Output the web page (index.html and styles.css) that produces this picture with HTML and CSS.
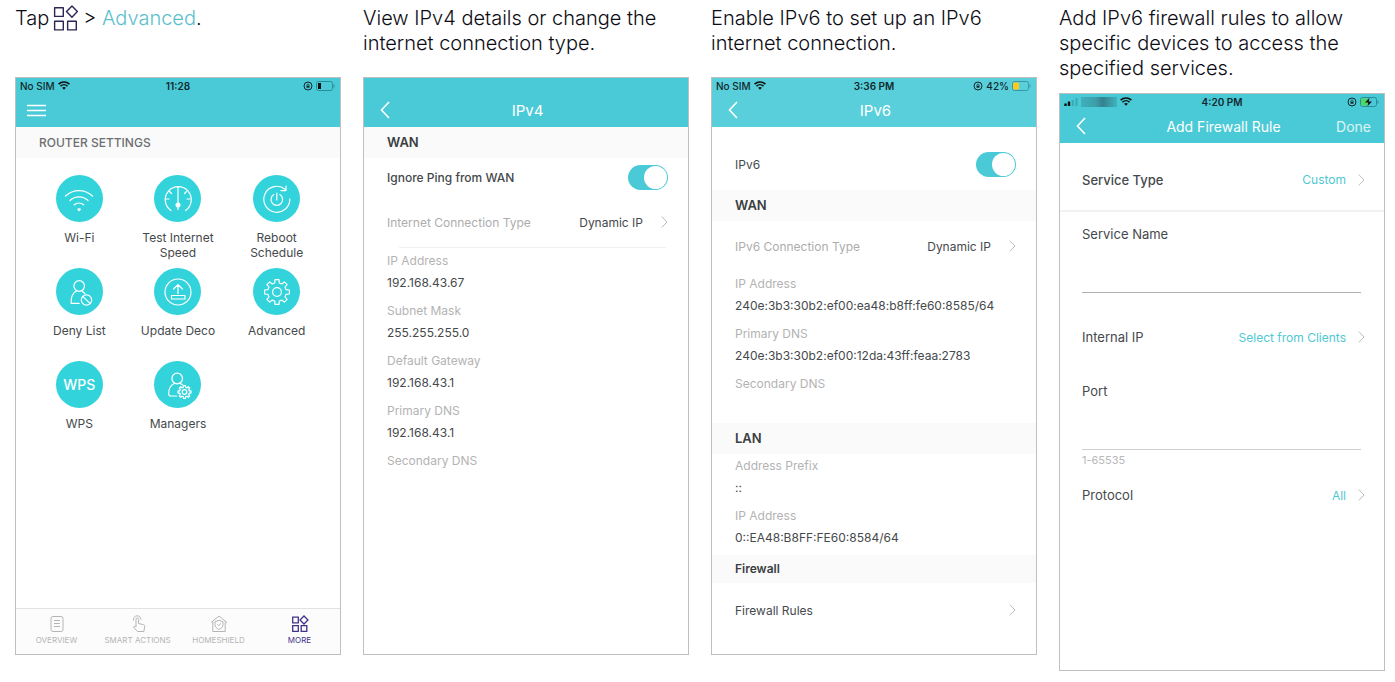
FILE: index.html
```html
<!DOCTYPE html>
<html lang="en">

<head>
    <meta charset="UTF-8">
    <meta name="viewport" content="width=device-width, initial-scale=1.0">
    <title>Deco IPv6 setup</title>
    <link rel="stylesheet" href="styles.css">
</head>

<body>
    <!-- shared icons -->
    <svg class="sprite" aria-hidden="true">
        <symbol id="wifi" viewBox="0 0 12 9">
            <path d="M0.6 3.2a7.8 7.8 0 0 1 10.8 0M2.5 5.2a5 5 0 0 1 7 0" fill="none" stroke="currentColor" stroke-width="1.6" />
            <path d="M4.1 6.8a2.8 2.8 0 0 1 3.8 0L6 8.8z" fill="currentColor" />
        </symbol>
        <symbol id="lock" viewBox="0 0 10 10">
            <circle cx="5" cy="5" r="4" fill="none" stroke="currentColor" />
            <path d="M3.5 4.9h3v1.8h-3z" fill="currentColor" />
            <path d="M4 5V4a1 1 0 0 1 2 0v1" fill="none" stroke="currentColor" stroke-width=".7" />
        </symbol>
        <symbol id="back" viewBox="0 0 10 18">
            <path d="M9 1L1.5 9L9 17" fill="none" stroke="currentColor" stroke-width="1.6" />
        </symbol>
        <symbol id="chevron" viewBox="0 0 7 12">
            <path d="M.8.6L6 6L.8 11.4" fill="none" stroke="currentColor" />
        </symbol>
        <symbol id="more" viewBox="0 0 24 24">
            <path d="M1.5 2.5h8v8h-8zM1.5 15h8v8h-8zM13.5 15h8v8h-8zM17.5.9l5 5.2l-5 5.2l-5-5.2z" fill="none" stroke="currentColor" stroke-width="1.3" stroke-linejoin="round" />
        </symbol>
        <symbol id="more-bold" viewBox="0 0 18 18">
            <path d="M1.7 2.2h5.600v5.600h-5.600zM1.700 10.700h5.600v5.600h-5.600zM10.200 10.700h5.600v5.600h-5.600zM13 1l4 4l-4 4l-4-4z" fill="none" stroke="currentColor" stroke-width="1.300" />
        </symbol>
        <symbol id="gear" viewBox="0 0 46 46">
            <path vector-effect="non-scaling-stroke" d="M20.7 14L21 10.6h4l.3 3.400A9.300 9.300 0 0 1 27.800 15L30.300 12.900L33.100 15.700L31 18.200A9.300 9.300 0 0 1 32 20.700L35.400 21v4L32 25.300A9.300 9.300 0 0 1 31 27.800L33.100 30.300L30.300 33.100L27.800 31A9.300 9.300 0 0 1 25.300 32L25 35.400h-4L20.700 32A9.300 9.300 0 0 1 18.200 31L15.700 33.100L12.900 30.300L15 27.800A9.300 9.300 0 0 1 14 25.300L10.600 25v-4L14 20.700A9.300 9.300 0 0 1 15 18.200L12.900 15.700L15.700 12.900L18.200 15A9.300 9.300 0 0 1 20.700 14z" />
            <circle vector-effect="non-scaling-stroke" cx="23" cy="23" r="4.400" />
        </symbol>
    </svg>

    <main class="steps">
        <!-- More tab -->
        <section class="step">
            <p class="caption">Tap<svg class="caption-icon" role="img" aria-label="More"><use href="#more" /></svg>&gt; <a href="#advanced">Advanced</a>.</p>
            <div class="phone">
                <header class="phone-header">
                    <div class="status">
                        <span class="status-left">No SIM <svg class="status-wifi"><use href="#wifi" /></svg></span>
                        <span class="status-time">11:28</span>
                        <span class="status-right">
                            <svg class="status-lock"><use href="#lock" /></svg>
                            <svg class="battery" viewBox="0 0 20 10"><rect x=".5" y=".5" width="16" height="9" rx="2" fill="none" stroke="#2a8d99" /><rect x="2" y="2" width="3" height="6" fill="#111" /><path d="M18 3.5v3" stroke="#2a8d99" /></svg>
                        </span>
                    </div>
                    <div class="nav">
                        <button class="nav-button menu" type="button" aria-label="Menu"><svg viewBox="0 0 19 13"><path d="M0 1.5h19M0 6.5h19M0 11.5h19" stroke="currentColor" stroke-width="1.6" /></svg></button>
                    </div>
                </header>
                <h2 class="group-title settings-title">ROUTER SETTINGS</h2>
                <div class="tiles">
                    <a class="tile" href="#wi-fi">
                        <span class="tile-icon"><svg viewBox="0 0 46 46"><path d="M9.5 20a19.5 19.5 0 0 1 27 0M14 24.500a13 13 0 0 1 18 0M18.300 28.800a7 7 0 0 1 9.400 0" /><path class="solid" d="M21.800 33.200a2.400 2.400 0 0 1 2.600 0l-1.300 1.500z" /></svg></span>
                        Wi-Fi
                    </a>
                    <a class="tile" href="#speed">
                        <span class="tile-icon"><svg viewBox="0 0 46 46"><path d="M16 34.5a13 13 0 1 1 14.5 0M23 11.500v15M14.500 15.500l2 2M31.500 15.500l-2 2M11 23h3M35 23h-3" /><circle class="solid" cx="23" cy="29" r="1.9" /><path d="M23 30v3.500" /></svg></span>
                        Test Internet Speed
                    </a>
                    <a class="tile" href="#reboot">
                        <span class="tile-icon"><svg viewBox="0 0 46 46"><path d="M31 13.200a13 13 0 1 0 4.800 9.800M32 10v4.600h-5M19.800 18.600a5.800 5.800 0 1 0 6 0M22.800 17v7" /></svg></span>
                        Reboot Schedule
                    </a>
                    <a class="tile" href="#deny-list">
                        <span class="tile-icon"><svg viewBox="0 0 46 46"><circle cx="23.2" cy="17" r="5.3" /><path d="M20.5 21.800c-3.500 2-5.800 6.500-5.300 12.600h8M26 22l3 2.700" /><circle cx="30.500" cy="31" r="5.200" /><path d="M26.800 27.300l7.400 7.400" /></svg></span>
                        Deny List
                    </a>
                    <a class="tile" href="#update">
                        <span class="tile-icon"><svg viewBox="0 0 46 46"><circle cx="23" cy="23" r="13" /><path d="M23 24.500V15.800M18.500 20l4.500-4.400l4.500 4.400M16.500 26.500h13.500v3.500H16.500z" /></svg></span>
                        Update Deco
                    </a>
                    <a class="tile" href="#advanced" id="advanced">
                        <span class="tile-icon"><svg viewBox="0 0 46 46"><use href="#gear" /></svg></span>
                        Advanced
                    </a>
                    <a class="tile" href="#wps">
                        <span class="tile-icon tile-text">WPS</span>
                        WPS
                    </a>
                    <a class="tile" href="#managers">
                        <span class="tile-icon"><svg viewBox="0 0 46 46"><circle cx="22.2" cy="16.5" r="5.300" /><path d="M19.500 21.300c-3.600 2-6 5.500-5.800 10.500c0 1.400.8 2.200 2 2.200h6M25 21.300l2.500 1.500" /><use href="#gear" x="17.500" y="18" width="24" height="24" /></svg></span>
                        Managers
                    </a>
                </div>
                <nav class="tabs">
                    <a class="tab" href="#overview">
                        <svg viewBox="0 0 18 18"><rect x="3" y="1.500" width="12" height="15" rx="2" /><path d="M6 5.500h6M6 8.500h6M6 11.500h6" /></svg>
                        OVERVIEW
                    </a>
                    <a class="tab" href="#smart">
                        <svg viewBox="0 0 18 18"><path d="M7 12V4.300a1.300 1.300 0 0 1 2.600 0v4.200l5 1.200c1 .3 1.200.9 1.100 1.700l-.8 5.100H8.500l-4-4.500c.6-1 1.600-.9 2.500 0M4.500 5.500a3.800 3.800 0 1 1 7.500-.8" /></svg>
                        SMART ACTIONS
                    </a>
                    <a class="tab" href="#homeshield">
                        <svg viewBox="0 0 18 18"><path d="M1 7.500L9 1l8 6.500M2.800 6.500v10h12.400v-10M9 5.300l4 1.400v3c0 2.300-1.800 3.800-4 4.800c-2.200-1-4-2.500-4-4.800v-3zM7.300 9.300l1.400 1.400l2.300-2.300" /></svg>
                        HOMESHIELD
                    </a>
                    <a class="tab active" href="#more-tab">
                        <svg><use href="#more-bold" /></svg>
                        MORE
                    </a>
                </nav>
            </div>
        </section>

        <!-- IPv4 -->
        <section class="step">
            <p class="caption">View IPv4 details or change the internet connection type.</p>
            <div class="phone">
                <header class="phone-header">
                    <div class="status"></div>
                    <div class="nav">
                        <button class="nav-button" type="button" aria-label="Back"><svg class="back"><use href="#back" /></svg></button>
                        <h2 class="nav-title">IPv4</h2>
                    </div>
                </header>
                <h3 class="group-title">WAN</h3>
                <div class="row strong">
                    <label for="ping">Ignore Ping from WAN</label>
                    <input class="switch" type="checkbox" id="ping" checked>
                </div>
                <button class="row row-button" type="button">
                    <span class="muted">Internet Connection Type</span>
                    <span class="row-value">Dynamic IP</span>
                    <svg class="chevron"><use href="#chevron" /></svg>
                </button>
                <hr class="divider">
                <dl class="details">
                    <dt>IP Address</dt>
                    <dd>192.168.43.67</dd>
                    <dt>Subnet Mask</dt>
                    <dd>255.255.255.0</dd>
                    <dt>Default Gateway</dt>
                    <dd>192.168.43.1</dd>
                    <dt>Primary DNS</dt>
                    <dd>192.168.43.1</dd>
                    <dt>Secondary DNS</dt>
                    <dd></dd>
                </dl>
            </div>
        </section>

        <!-- IPv6 -->
        <section class="step">
            <p class="caption">Enable IPv6 to set up an IPv6 internet connection.</p>
            <div class="phone">
                <header class="phone-header light">
                    <div class="status">
                        <span class="status-left">No SIM <svg class="status-wifi"><use href="#wifi" /></svg></span>
                        <span class="status-time">3:36 PM</span>
                        <span class="status-right">
                            <svg class="status-lock"><use href="#lock" /></svg>
                            42%
                            <svg class="battery" viewBox="0 0 20 10"><rect x=".5" y=".5" width="16" height="9" rx="2" fill="none" stroke="#3a98a2" /><rect x="1" y="1.5" width="6" height="7" rx="1" fill="#fecb1c" /><path d="M18 3.5v3" stroke="#3a98a2" /></svg>
                        </span>
                    </div>
                    <div class="nav">
                        <button class="nav-button" type="button" aria-label="Back"><svg class="back"><use href="#back" /></svg></button>
                        <h2 class="nav-title">IPv6</h2>
                    </div>
                </header>
                <div class="row first">
                    <label for="ipv6">IPv6</label>
                    <input class="switch" type="checkbox" id="ipv6" checked>
                </div>
                <h3 class="group-title">WAN</h3>
                <button class="row row-button" type="button">
                    <span class="muted">IPv6 Connection Type</span>
                    <span class="row-value">Dynamic IP</span>
                    <svg class="chevron"><use href="#chevron" /></svg>
                </button>
                <dl class="details">
                    <dt>IP Address</dt>
                    <dd>240e:3b3:30b2:ef00:ea48:b8ff:fe60:8585/64</dd>
                    <dt>Primary DNS</dt>
                    <dd>240e:3b3:30b2:ef00:12da:43ff:feaa:2783</dd>
                    <dt>Secondary DNS</dt>
                    <dd></dd>
                </dl>
                <h3 class="group-title">LAN</h3>
                <dl class="details tight">
                    <dt>Address Prefix</dt>
                    <dd>::</dd>
                    <dt>IP Address</dt>
                    <dd>0::EA48:B8FF:FE60:8584/64</dd>
                </dl>
                <h3 class="group-title small">Firewall</h3>
                <button class="row row-button rules" type="button">
                    <span>Firewall Rules</span>
                    <svg class="chevron"><use href="#chevron" /></svg>
                </button>
            </div>
        </section>

        <!-- Firewall rule form -->
        <section class="step">
            <p class="caption">Add IPv6 firewall rules to allow specific devices to access the specified services.</p>
            <div class="phone">
                <header class="phone-header">
                    <div class="status">
                        <span class="status-left">
                            <svg class="signal" viewBox="0 0 14 8"><path d="M1.5 8V5.5M5 8V3.5" stroke="#111" stroke-width="2.4" /><path d="M8.8 8V2M12.5 8V0" stroke="#36a9b5" stroke-width="2" /></svg>
                            <span class="carrier"></span>
                            <svg class="status-wifi"><use href="#wifi" /></svg>
                        </span>
                        <span class="status-time">4:20 PM</span>
                        <span class="status-right">
                            <svg class="status-lock"><use href="#lock" /></svg>
                            <svg class="battery" viewBox="0 0 20 10"><rect x=".5" y=".5" width="16" height="9" rx="2" fill="none" stroke="#2a8d99" /><rect x="1" y="1.5" width="7" height="7" rx="1" fill="#4cd964" /><path d="M18 3.5v3" stroke="#2a8d99" /><path d="M9.5.8L5 5.600h3.300L7.500 9.200L12 4.400H8.800z" fill="#111" /></svg>
                        </span>
                    </div>
                    <div class="nav">
                        <button class="nav-button" type="button" aria-label="Back"><svg class="back"><use href="#back" /></svg></button>
                        <h2 class="nav-title long">Add Firewall Rule</h2>
                        <button class="nav-button done" type="button">Done</button>
                    </div>
                </header>
                <form class="form">
                    <button class="row row-button service" type="button">
                        <span>Service Type</span>
                        <span class="row-value">Custom</span>
                        <svg class="chevron"><use href="#chevron" /></svg>
                    </button>
                    <div class="field named">
                        <label for="name">Service Name</label>
                        <input type="text" id="name">
                    </div>
                    <button class="row row-button clients" type="button">
                        <span>Internal IP</span>
                        <span class="row-value">Select from Clients</span>
                        <svg class="chevron"><use href="#chevron" /></svg>
                    </button>
                    <div class="field">
                        <label for="port">Port</label>
                        <input class="thin" type="text" id="port" aria-describedby="port-hint">
                        <small id="port-hint">1-65535</small>
                    </div>
                    <button class="row row-button" type="button">
                        <span>Protocol</span>
                        <span class="row-value">All</span>
                        <svg class="chevron"><use href="#chevron" /></svg>
                    </button>
                </form>
            </div>
        </section>
    </main>
</body>

</html>
```
FILE: styles.css
```css
*,
*::before,
*::after {
    margin: 0;
    padding: 0;
    box-sizing: border-box;
}

body {
    background: #fff;
    color: #45494c;
    font-family: Inter, "Liberation Sans", sans-serif;
    font-size: 13px;
}

a {
    color: inherit;
    text-decoration: none;
}

button,
input {
    border: none;
    background: none;
    color: inherit;
    font: inherit;
}

button {
    cursor: pointer;
}

.sprite {
    display: none;
}

.steps {
    display: grid;
    grid-template-columns: repeat(4, minmax(0, 1fr));
    gap: 22px;
    align-items: start;
    padding: 6px 10px 8px 15px;
}

.caption {
    min-height: 59px;
    margin-bottom: 12px;
    color: #0c0c14;
    font-size: 20px;
    font-weight: 300;
    line-height: 25px;
}

.caption a {
    color: #5bc0cd;
}

.caption-icon {
    width: 26px;
    height: 26px;
    margin: -4px 4px 0;
    color: #2b2752;
    vertical-align: middle;
}

/* phone frame */

.phone {
    display: flex;
    flex-direction: column;
    aspect-ratio: 326 / 578;
    border: 1px solid #bfbfbf;
}

.phone-header {
    background: #4acad6;
    color: #fff;
}

.phone-header.light {
    background: #58cfda;
}

.status {
    display: grid;
    grid-template-columns: 1fr auto 1fr;
    align-items: center;
    height: 15px;
    padding: 0 4px;
    color: #12282c;
    font-size: 10px;
    font-weight: 500;
}

.status-left,
.status-right {
    display: flex;
    align-items: center;
    gap: 3px;
}

.status-right {
    justify-content: flex-end;
}

.status-time {
    font-weight: 600;
}

.status-wifi {
    width: 12px;
    height: 9px;
    color: #111;
}

.status-lock {
    width: 10px;
    height: 10px;
}

.battery {
    width: 20px;
    height: 10px;
}

.signal {
    width: 14px;
    height: 8px;
}

.carrier {
    width: 36px;
    height: 10px;
    background: linear-gradient(90deg, #3fb0bb, #3d9fab 40%, #32828e 60%, #3d9fab 85%, #3fb4bf);
}

.nav {
    display: grid;
    grid-template-columns: 1fr auto 1fr;
    align-items: center;
    height: 34px;
    padding: 0 13px 0 16px;
}

.nav-button {
    display: flex;
    justify-self: start;
}

.menu {
    margin-left: -5px;
}

.menu svg {
    width: 19px;
    height: 13px;
}

.back {
    width: 10px;
    height: 18px;
}

.nav-title {
    font-size: 15px;
    font-weight: 400;
}

.nav-title.long {
    font-size: 14px;
}

.done {
    justify-self: end;
    font-size: 14px;
    opacity: .8;
}

.group-title {
    padding: 0 23px;
    background: #fafafa;
    color: #3a3f42;
    font-size: 13px;
    font-weight: 600;
    line-height: 31px;
}

.group-title.small {
    font-size: 12px;
    line-height: 28px;
}

.settings-title {
    color: #6c6f71;
    font-size: 12px;
    font-weight: 500;
}

/* settings tiles */

.tiles {
    display: grid;
    grid-template-columns: repeat(3, 1fr);
    row-gap: 8px;
    padding: 17px 14px 0;
}

.tile {
    display: flex;
    flex-direction: column;
    align-items: center;
    min-height: 85px;
    padding: 0 10px;
    font-size: 12px;
    line-height: 15px;
    text-align: center;
}

.tile-icon {
    display: flex;
    align-items: center;
    justify-content: center;
    width: 47px;
    height: 47px;
    margin-bottom: 8px;
    border-radius: 50%;
    background: #33d3dc;
    color: #fff;
}

.tile-icon svg {
    width: 46px;
    height: 46px;
    fill: none;
    stroke: currentColor;
    stroke-width: 1.2;
    stroke-linecap: round;
    stroke-linejoin: round;
}

.tile-icon .solid {
    fill: currentColor;
}

.tile-text {
    font-size: 14px;
    font-weight: 500;
}

/* bottom tabs */

.tabs {
    display: grid;
    grid-template-columns: repeat(4, 1fr);
    height: 46px;
    margin-top: auto;
    border-top: 1px solid #e2e2e2;
    background: #fcfcfc;
}

.tab {
    display: flex;
    flex-direction: column;
    align-items: center;
    gap: 1px;
    padding-top: 6px;
    color: #b5b5b5;
    font-size: 8px;
    line-height: 12px;
    white-space: nowrap;
}

.tab svg {
    width: 18px;
    height: 18px;
    fill: none;
    stroke: currentColor;
}

.tab.active {
    color: #3f3388;
}

/* rows */

.row {
    display: flex;
    align-items: center;
    width: 100%;
    min-height: 39px;
    padding: 0 20px 0 23px;
    font-size: 12px;
    text-align: left;
}

.row.first {
    min-height: 51px;
    margin-top: 12px;
}

.row.strong {
    font-weight: 500;
}

.row-button {
    min-height: 50px;
}

.rules {
    min-height: 54px;
}

.row-value {
    margin-left: auto;
}

.muted {
    color: #adadad;
}

.chevron {
    flex: none;
    width: 7px;
    height: 12px;
    margin-left: 18px;
    color: #bcbcbc;
}

.row > span:first-child + .chevron {
    margin-left: auto;
}

.switch {
    appearance: none;
    width: 40px;
    height: 25px;
    margin-left: auto;
    border-radius: 13px;
    background: #ccc;
    cursor: pointer;
}

.switch::before {
    content: "";
    display: block;
    width: 23px;
    height: 23px;
    margin: 1px;
    border-radius: 50%;
    background: #fff;
}

.switch:checked {
    background: #4acad6;
}

.switch:checked::before {
    margin-left: 16px;
}

.divider {
    margin: 0 22px 0 35px;
    border: none;
    border-top: 1px solid #f0f0f0;
}

.details {
    padding: 2px 23px 0;
    font-size: 12px;
}

.details.tight {
    padding-top: 1px;
}

.details dt {
    color: #b3b3b3;
    line-height: 22px;
}

.details dd {
    min-height: 21px;
    margin-bottom: 7px;
    line-height: 21px;
}

/* firewall rule form */

.form {
    font-size: 13px;
}

.form .row {
    padding: 0 19px 0 22px;
    font-size: 13px;
}

.form .row-value {
    color: #4fc8d2;
    font-size: 12px;
}

.form .chevron {
    margin-left: 12px;
}

.form .service {
    min-height: 69px;
    padding-top: 6px;
    border-bottom: 2px solid #f2f2f2;
    font-weight: 500;
}

.form .service .row-value {
    font-weight: 400;
}

.form .clients {
    min-height: 88px;
}

.field {
    display: flex;
    flex-direction: column;
    padding: 0 23px 0 22px;
}

.named {
    padding-top: 12px;
}

.field label {
    line-height: 20px;
}

.field input {
    height: 49px;
    border-bottom: 1px solid #b0b0b0;
    outline: none;
}

.field .thin {
    border-color: #cfcfcf;
}

.field small {
    color: #b8b8b8;
    font-size: 11px;
    line-height: 20px;
}
```
